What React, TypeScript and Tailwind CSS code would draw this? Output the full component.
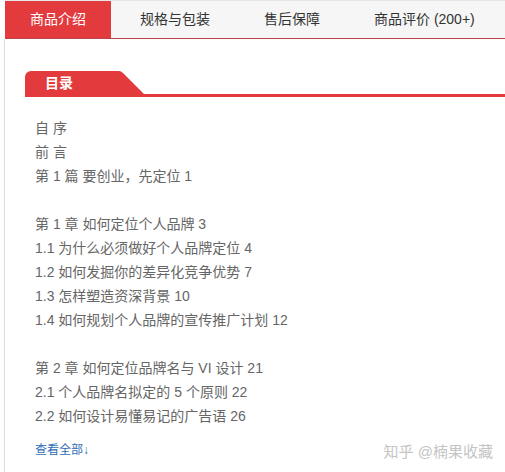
import React from "react";

const lines: string[] = [
  "自 序",
  "前 言",
  "第 1 篇 要创业，先定位 1",
  "",
  "第 1 章 如何定位个人品牌 3",
  "1.1 为什么必须做好个人品牌定位 4",
  "1.2 如何发掘你的差异化竞争优势 7",
  "1.3 怎样塑造资深背景 10",
  "1.4 如何规划个人品牌的宣传推广计划 12",
  "",
  "第 2 章 如何定位品牌名与 VI 设计 21",
  "2.1 个人品牌名拟定的 5 个原则 22",
  "2.2 如何设计易懂易记的广告语 26",
];

export default function App() {
  return (
    <div
      className="w-[505px] h-[472px] bg-white overflow-hidden relative"
      style={{ fontFamily: '"Liberation Sans", "Noto Sans CJK SC", sans-serif' }}
    >
      <div className="ml-[5px] h-[39px] bg-[#f6f6f6] border-t border-[#e6e6e6] border-b border-b-[#b8434b] flex items-stretch text-[14px] text-[#333]">
        <div className="w-[106px] bg-[#e23a3d] text-white flex items-center justify-center">商品介绍</div>
        <div className="ml-[29px] flex items-center">规格与包装</div>
        <div className="ml-[54px] flex items-center">售后保障</div>
        <div className="ml-[54px] flex items-center">商品评价 (200+)</div>
      </div>
      <div className="ml-[4px] border-l border-[#dddddd] h-[433px]">
        <div className="pt-[32px] pl-[20px]">
          <div className="flex items-end">
            <div className="w-[93px] h-[23px] bg-[#e23a3d] rounded-tl-[6px] text-white font-bold text-[14px] leading-[23px] pl-[20px] pt-[1px]">
              目录
            </div>
            <svg width="26" height="23" viewBox="0 0 26 23" className="block">
              <path d="M0 0 L1 0 Q3 0 5 2 L26 23 L0 23 Z" fill="#e23a3d" />
            </svg>
          </div>
          <div className="h-[3px] bg-[#e23a3d]" />
        </div>
        <div className="pl-[30px] pt-[19px] text-[14px] leading-[24px] text-[#666]">
          {lines.map((l, i) => (
            <div key={i} className="h-[24px] whitespace-pre">
              {l}
            </div>
          ))}
          <div className="mt-[10px] text-[12px] leading-[24px] text-[#2f6db5]">查看全部↓</div>
        </div>
      </div>
      <div
        className="absolute right-[12px] top-[441px] text-[15px] leading-[22px] text-[#c4c4c4]"
        style={{ textShadow: "0 0 1px #fff" }}
      >
        知乎 @楠果收藏
      </div>
    </div>
  );
}
